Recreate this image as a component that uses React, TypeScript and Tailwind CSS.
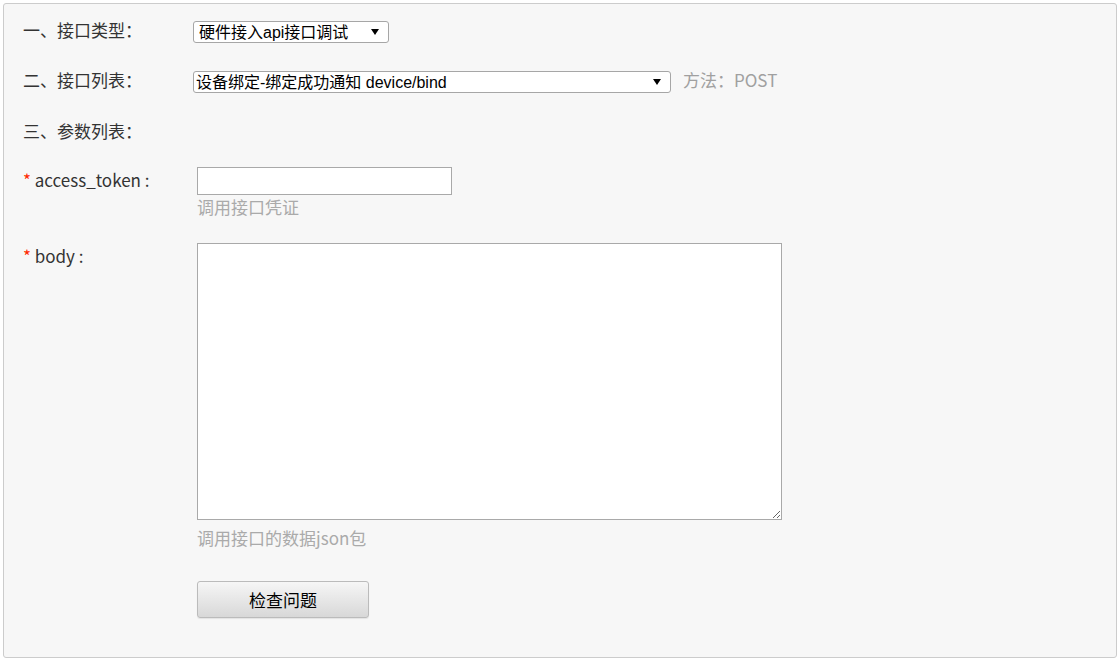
import React, { useState } from 'react';

const labelFont = "font-['Noto_Sans_CJK_SC','Noto_Sans',sans-serif]";
const selectFont = "font-['Liberation_Sans','Noto_Sans_CJK_SC',sans-serif]";

function Arrow() {
  return (
    <svg width="8" height="6" viewBox="0 0 8 6" className="pointer-events-none absolute right-[10px] top-[8px]">
      <path d="M0 0 L8 0 L4 6 Z" fill="#000" />
    </svg>
  );
}

export default function App() {
  const [apiType, setApiType] = useState('hw');
  const [api, setApi] = useState('bind');
  const [token, setToken] = useState('');
  const [body, setBody] = useState('');

  return (
    <div className={`bg-white p-[3px] ${labelFont}`}>
      <div className="h-[655px] rounded-[3px] border border-[#cccccc] bg-[#f7f7f7] pl-[19px] pt-[17px] text-[17px] text-[#333333]">
        {/* 接口类型 */}
        <div className="flex items-start">
          <div className="w-[170px] leading-[18px]">一、接口类型：</div>
          <div className="relative">
            <select
              value={apiType}
              onChange={(e) => setApiType(e.target.value)}
              className={`block h-[22px] w-[196px] appearance-none rounded-[3px] border border-[#a6a6a6] bg-white pl-[5px] pt-[2px] text-[16px] leading-[18px] text-black outline-none ${selectFont}`}
            >
              <option value="hw">硬件接入api接口调试</option>
            </select>
            <Arrow />
          </div>
        </div>

        {/* 接口列表 */}
        <div className="mt-[28px] flex items-start">
          <div className="w-[170px] leading-[18px]">二、接口列表：</div>
          <div className="relative">
            <select
              value={api}
              onChange={(e) => setApi(e.target.value)}
              className={`block h-[22px] w-[478px] appearance-none rounded-[3px] border border-[#a6a6a6] bg-white pl-[2px] pt-[2px] text-[16px] leading-[18px] text-black outline-none ${selectFont}`}
            >
              <option value="bind">设备绑定-绑定成功通知 device/bind</option>
            </select>
            <Arrow />
          </div>
          <div className="ml-[12px] leading-[17px] text-[#a0a0a0]">方法：POST</div>
        </div>

        {/* 参数列表 */}
        <div className="mt-[27px] leading-[22px]">三、参数列表：</div>

        {/* access_token */}
        <div className="mt-[25px] flex items-start">
          <div className="w-[174px] leading-[26px]">
            <span className="text-[#ff2a00]">* </span>access_token :
          </div>
          <div>
            <input
              value={token}
              onChange={(e) => setToken(e.target.value)}
              className="block h-[28px] w-[255px] border border-[#a9a9a9] bg-white px-1 outline-none"
            />
            <div className="leading-[24px] text-[#aaaaaa]">调用接口凭证</div>
          </div>
        </div>

        {/* body */}
        <div className="mt-[24px] flex items-start">
          <div className="w-[174px] leading-[26px]">
            <span className="text-[#ff2a00]">* </span>body :
          </div>
          <div>
            <textarea
              value={body}
              onChange={(e) => setBody(e.target.value)}
              className="block h-[277px] w-[585px] border border-[#a9a9a9] bg-white p-1 outline-none"
            />
            <div className="mt-[7px] leading-[22px] text-[#aaaaaa]">调用接口的数据json包</div>
            <button className="mt-[32px] h-[37px] w-[172px] rounded-[3px] border border-[#bbbbbb] bg-gradient-to-b from-[#f6f6f6] to-[#d8d8d8] text-[17px] text-black shadow-[0_1px_1px_rgba(0,0,0,0.08)]">
              检查问题
            </button>
          </div>
        </div>
      </div>
    </div>
  );
}
